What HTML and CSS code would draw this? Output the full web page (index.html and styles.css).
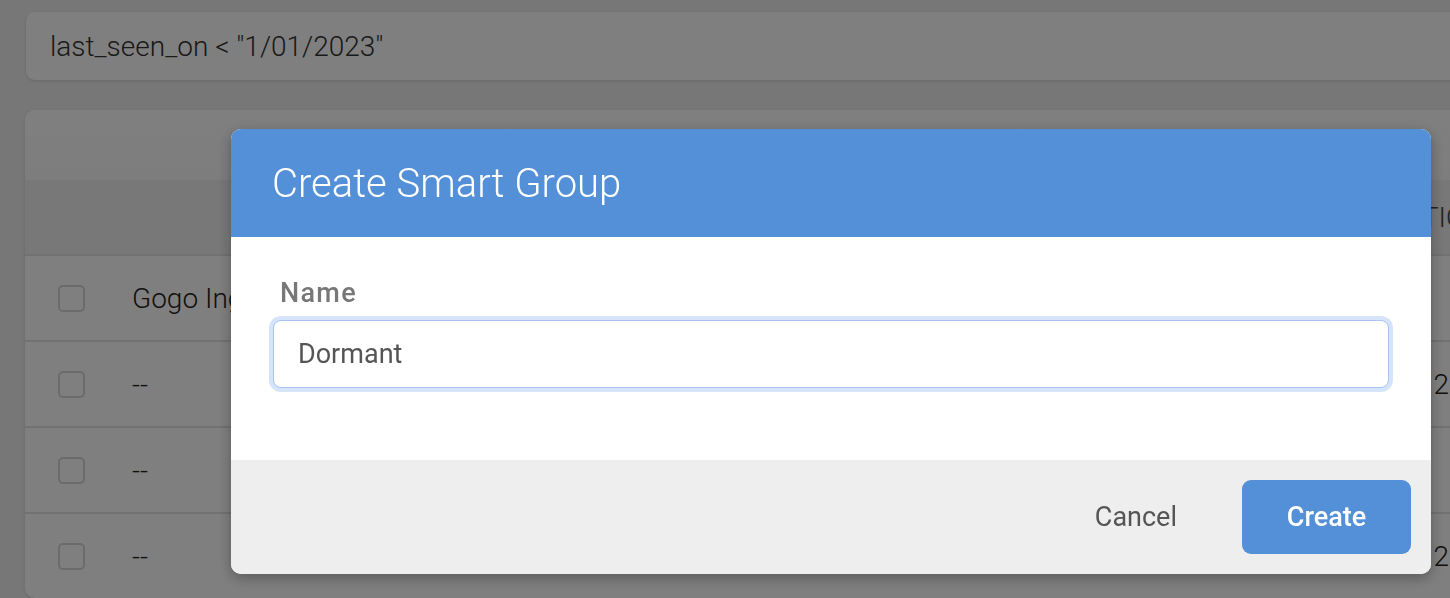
FILE: index.html
```html
<!DOCTYPE html>
<html lang="en">
<head>
    <meta charset="UTF-8">
    <meta name="viewport" content="width=device-width, initial-scale=1.0">
    <title>Smart Groups</title>
    <link rel="stylesheet" href="styles.css">
</head>
<body>
    <div class="page">
        <div class="search">last_seen_on &lt; "1/01/2023"</div>

        <div class="card">
            <div class="card-top"></div>
            <div class="row head">
                <div class="cell check"></div>
                <div class="cell name"></div>
                <div class="cell last">LOCATION</div>
            </div>
            <div class="row">
                <div class="cell check"><span class="box"></span></div>
                <div class="cell name">Gogo Inglewood</div>
                <div class="cell last"></div>
            </div>
            <div class="row">
                <div class="cell check"><span class="box"></span></div>
                <div class="cell name">--</div>
                <div class="cell last">12</div>
            </div>
            <div class="row">
                <div class="cell check"><span class="box"></span></div>
                <div class="cell name">--</div>
                <div class="cell last"></div>
            </div>
            <div class="row">
                <div class="cell check"><span class="box"></span></div>
                <div class="cell name">--</div>
                <div class="cell last">12</div>
            </div>
        </div>
    </div>

    <!-- modal -->
    <div class="overlay"></div>
    <div class="modal">
        <div class="modal-header">Create Smart Group</div>
        <div class="modal-body">
            <label class="field-label" for="group-name">Name</label>
            <input id="group-name" class="field-input" type="text" value="Dormant">
        </div>
        <div class="modal-footer">
            <button class="btn btn-cancel" type="button">Cancel</button>
            <button class="btn btn-create" type="button">Create</button>
        </div>
    </div>
</body>
</html>
```

FILE: styles.css
```css
html, body {
    margin: 0;
    height: 100%;
    overflow: hidden;
}

body {
    background: #eeeeee;
    font-family: Roboto, "Liberation Sans", sans-serif;
    color: #222;
}

.page {
    padding: 12px 0 0 25px;
    width: 1500px;
}

.search {
    margin-left: 1px;
    height: 68px;
    box-sizing: border-box;
    background: #fff;
    border-radius: 9px;
    box-shadow: 0 1px 3px rgba(0, 0, 0, 0.12);
    padding: 0 24px;
    display: flex;
    align-items: center;
    font-size: 28px;
    font-weight: 300;
    color: #333;
}

.card {
    margin-top: 30px;
    background: #fff;
    border-radius: 10px;
    box-shadow: 0 1px 3px rgba(0, 0, 0, 0.12);
    overflow: hidden;
}

.card-top {
    height: 70px;
    background: linear-gradient(#fff, #fbfbfb);
}

.row {
    display: flex;
    align-items: center;
    height: 86px;
    box-sizing: border-box;
    border-top: 2px solid #e4e4e4;
    font-size: 28px;
    font-weight: 300;
}

.row.head {
    height: 74px;
    border-top: none;
    background: #f1f1f1;
    color: #444;
}

.cell.check {
    width: 107px;
    padding-left: 33px;
    box-sizing: border-box;
    display: flex;
}

.box {
    width: 23px;
    height: 23px;
    border: 2px solid #d6d6d6;
    border-radius: 5px;
}

.cell.name {
    width: 1286px;
}

.row.head .cell.name {
    width: 1223px;
}

.cell.last {
    white-space: nowrap;
}

.overlay {
    position: fixed;
    inset: 0;
    background: rgba(0, 0, 0, 0.5);
}

.modal {
    position: fixed;
    left: 231px;
    top: 129px;
    width: 1200px;
    background: #fff;
    border-radius: 10px;
    overflow: hidden;
    box-shadow: 0 4px 14px rgba(0, 0, 0, 0.3);
}

.modal-header {
    height: 108px;
    background: #5390d8;
    color: #fff;
    font-size: 40px;
    font-weight: 300;
    display: flex;
    align-items: center;
    padding: 0 41px;
}

.modal-body {
    padding: 40px 41px 72px 41px;
    display: flex;
    flex-direction: column;
}

.field-label {
    font-size: 27px;
    font-weight: 500;
    color: #777;
    letter-spacing: 1.3px;
    margin-left: 8px;
    margin-bottom: 11px;
    line-height: 32px;
}

.field-input {
    height: 68px;
    box-sizing: border-box;
    border: 1px solid #a6c4f4;
    border-radius: 8px;
    box-shadow: 0 0 0 4px #d6e4fb;
    padding: 0 24px;
    margin: 0 1px;
    font-family: Roboto, "Liberation Sans", sans-serif;
    font-size: 27px;
    color: #555;
    outline: none;
}

.modal-footer {
    background: #eeeeee;
    height: 114px;
    box-sizing: border-box;
    padding: 20px;
    display: flex;
    justify-content: flex-end;
    align-items: center;
}

.btn {
    font-family: Roboto, "Liberation Sans", sans-serif;
    font-size: 27px;
    border: none;
    background: none;
    cursor: pointer;
}

.btn-cancel {
    color: #555;
    padding: 0 32px;
    height: 74px;
    margin-right: 33px;
}

.btn-create {
    width: 169px;
    height: 74px;
    border-radius: 9px;
    background: #5390d8;
    color: #fff;
    font-weight: 500;
}
```
